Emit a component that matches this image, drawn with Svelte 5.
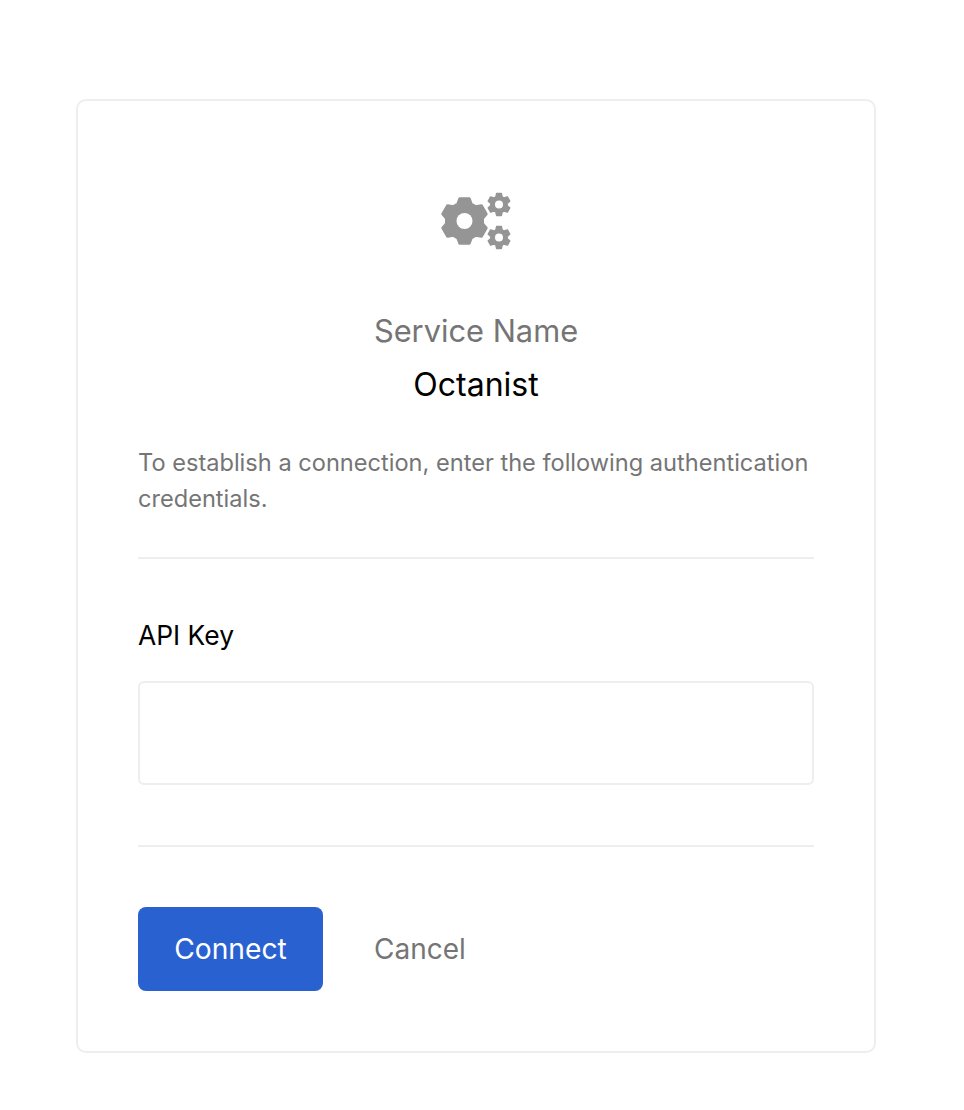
<script>
	// rounded cog outline: the round stroke softens the tooth corners
	function cog(cx, cy, outer, root, teeth = 6) {
		const pts = [];
		const step = (Math.PI * 2) / teeth;
		const pt = (r, a) => `${(cx + r * Math.cos(a)).toFixed(2)} ${(cy + r * Math.sin(a)).toFixed(2)}`;
		for (let i = 0; i < teeth; i++) {
			const a = i * step - Math.PI / 2;
			pts.push(pt(root, a - step * 0.36), pt(outer, a - step * 0.2), pt(outer, a + step * 0.2), pt(root, a + step * 0.36));
		}
		return pts.join('L');
	}

	const gears = [
		{ d: cog(25.5, 31, 22.8, 18.2), cx: 25.5, cy: 31, hole: 8, sw: 3 },
		{ d: cog(60, 14.5, 11.2, 8.2), cx: 60, cy: 14.5, hole: 4, sw: 1.6 },
		{ d: cog(60, 47.5, 11.2, 8.2), cx: 60, cy: 47.5, hole: 4, sw: 1.6 }
	];
</script>

<main class="page">
	<section class="card">
		<svg class="icon" width="74" height="62" viewBox="0 0 74 62" aria-hidden="true">
			{#each gears as g}
				<path d="M{g.d}Z" fill="#959595" stroke="#959595" stroke-width={g.sw} stroke-linejoin="round" />
				<circle cx={g.cx} cy={g.cy} r={g.hole} fill="#fff" />
			{/each}
		</svg>

		<h2 class="label">Service Name</h2>
		<p class="name">Octanist</p>

		<p class="desc">To establish a connection, enter the following authentication credentials.</p>

		<hr />

		<label class="field">
			<span>API Key</span>
			<input type="text" />
		</label>

		<hr />

		<div class="actions">
			<button class="connect">Connect</button>
			<button class="cancel">Cancel</button>
		</div>
	</section>
</main>

<style>
	:global(body) {
		background: #fff;
		font-family: Inter, "Noto Sans", sans-serif;
	}

	.page {
		padding: 99px 88px 57px 76px;
	}

	.card {
		box-sizing: border-box;
		width: 800px;
		height: 954px;
		padding: 89px 60px 60px;
		border: 2px solid #eeeeee;
		border-radius: 10px;
		display: flex;
		flex-direction: column;
	}

	.icon {
		align-self: center;
		margin-bottom: 59px;
	}

	.label {
		margin: 0;
		font-size: 30.8px;
		font-weight: 400;
		line-height: 40px;
		text-align: center;
		color: #757575;
	}

	.name {
		margin: 14px 0 0;
		font-size: 32px;
		line-height: 40px;
		text-align: center;
		color: #000;
	}

	.desc {
		margin: 40px 0 0;
		font-size: 23.6px;
		line-height: 36px;
		color: #757575;
	}

	hr {
		width: 100%;
		height: 2px;
		margin: 40px 0 0;
		border: 0;
		background: #eeeeee;
		flex: none;
	}

	.field {
		display: flex;
		flex-direction: column;
		margin-bottom: 60px;
		padding-top: 58px;
		color: #000;
		font-size: 26.4px;
		line-height: 36px;
	}

	.field input {
		box-sizing: border-box;
		height: 104px;
		margin-top: 28px;
		border: 2px solid #eeeeee;
		border-radius: 6px;
		outline: none;
		background: #fff;
	}

	.field + hr {
		margin-top: 0;
	}

	.actions {
		display: flex;
		align-items: center;
		gap: 51px;
		margin-top: 60px;
	}

	button {
		font: inherit;
		border: 0;
		cursor: pointer;
	}

	.connect {
		width: 185px;
		height: 84px;
		border-radius: 8px;
		background: #2962d0;
		color: #fff;
		font-size: 28.2px;
	}

	.cancel {
		padding: 0;
		background: none;
		color: #757575;
		font-size: 28px;
	}
</style>
